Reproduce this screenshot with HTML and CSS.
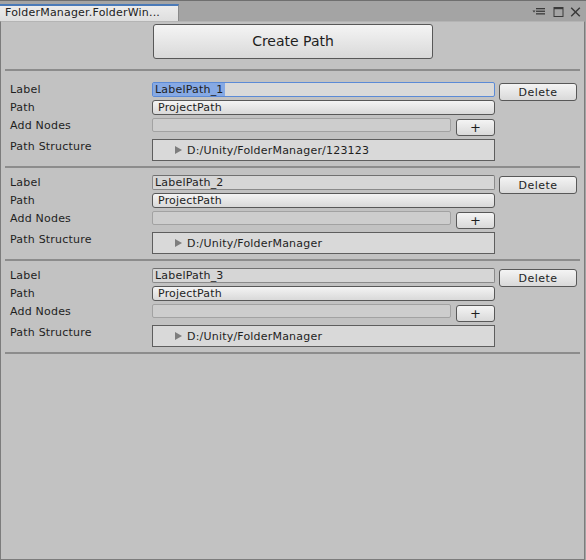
FILE: index.html
```html
<!DOCTYPE html>
<html>
<head>
<meta charset="utf-8">
<link rel="stylesheet" href="styles.css">
</head>
<body>
<div class="window">
  <div class="titlebar">
    <div class="tab">FolderManager.FolderWin...</div>
    <div class="controls">
      <svg class="ico" width="16" height="10" viewBox="0 0 16 10">
        <path d="M1.5 3.6 L4.5 3.6 L3 5.4 Z" fill="#3a3a3a"/>
        <rect x="5" y="1" width="9" height="1.3" fill="#3a3a3a"/>
        <rect x="5" y="3.6" width="9" height="1.3" fill="#3a3a3a"/>
        <rect x="5" y="6.2" width="9" height="1.3" fill="#3a3a3a"/>
      </svg>
      <svg class="ico" width="11" height="10" viewBox="0 0 11 10">
        <rect x="1" y="0.5" width="9" height="9" fill="none" stroke="#3a3a3a" stroke-width="1"/>
        <rect x="1" y="0" width="9" height="2.2" fill="#3a3a3a"/>
      </svg>
      <svg class="ico" width="11" height="10" viewBox="0 0 11 10">
        <path d="M1.2 0.8 L9.8 9.2 M9.8 0.8 L1.2 9.2" stroke="#3a3a3a" stroke-width="1.5" fill="none"/>
      </svg>
    </div>
  </div>
  <div class="content">
    <div class="toolbar">
      <button class="btn create">Create Path</button>
    </div>
    <div class="sep"></div>

    <section class="entry first">
      <div class="lbl">Label</div>
      <div class="field focused"><span class="sel">LabelPath_1</span></div>
      <button class="btn del">Delete</button>
      <div class="lbl">Path</div>
      <button class="btn popup">ProjectPath</button>
      <div class="lbl">Add Nodes</div>
      <div class="addrow"><div class="field disabled"></div><button class="btn plus">+</button></div>
      <div class="lbl">Path Structure</div>
      <div class="struct"><span class="tri"></span>D:/Unity/FolderManager/123123</div>
    </section>
    <div class="sep"></div>

    <section class="entry">
      <div class="lbl">Label</div>
      <div class="field">LabelPath_2</div>
      <button class="btn del">Delete</button>
      <div class="lbl">Path</div>
      <button class="btn popup">ProjectPath</button>
      <div class="lbl">Add Nodes</div>
      <div class="addrow"><div class="field disabled"></div><button class="btn plus">+</button></div>
      <div class="lbl">Path Structure</div>
      <div class="struct"><span class="tri"></span>D:/Unity/FolderManager</div>
    </section>
    <div class="sep"></div>

    <section class="entry">
      <div class="lbl">Label</div>
      <div class="field">LabelPath_3</div>
      <button class="btn del">Delete</button>
      <div class="lbl">Path</div>
      <button class="btn popup">ProjectPath</button>
      <div class="lbl">Add Nodes</div>
      <div class="addrow"><div class="field disabled"></div><button class="btn plus">+</button></div>
      <div class="lbl">Path Structure</div>
      <div class="struct"><span class="tri"></span>D:/Unity/FolderManager</div>
    </section>
    <div class="sep"></div>
  </div>
</div>
</body>
</html>
```

FILE: styles.css
```css
* { box-sizing: border-box; }
html, body { margin: 0; padding: 0; }
body {
  width: 586px;
  height: 560px;
  background: #a3a3a3;
  font-family: "DejaVu Sans", Verdana, sans-serif;
  font-size: 11px;
  letter-spacing: 0.2px;
  color: #1e1e1e;
  overflow: hidden;
}
.window {
  display: flex;
  flex-direction: column;
  height: 560px;
}
.titlebar {
  height: 21px;
  border-top: 1px solid #6f6f6f;
  background: #a4a4a4;
  display: flex;
  align-items: flex-end;
  flex: none;
}
.tab {
  width: 179px;
  height: 17px;
  border-top: 2px solid #4a7ab8;
  border-right: 1px solid #8a8a8a;
  background: linear-gradient(#ececec, #dedede);
  padding-left: 5px;
  line-height: 14px;
  color: #222;
  white-space: nowrap;
  overflow: hidden;
}
.controls {
  margin-left: auto;
  margin-right: 5px;
  align-self: center;
  display: flex;
  align-items: center;
  gap: 6px;
  padding-top: 2px;
}
.ico { display: block; }
.content {
  flex: 1;
  background: #c2c2c2;
  border-left: 1px solid #7c7c7c;
  border-right: 1px solid #7c7c7c;
  border-bottom: 1px solid #7c7c7c;
  margin-right: 1px;
  border-top: 1px solid #b4b4b4;
}
.toolbar {
  padding-top: 2px;
  padding-left: 152px;
}
.btn {
  font-family: "DejaVu Sans", Verdana, sans-serif;
  font-size: 11px;
  letter-spacing: 0.2px;
  color: #1e1e1e;
  background: linear-gradient(#f4f4f4, #d9d9d9);
  border: 1px solid #585858;
  border-radius: 3px;
  padding: 0;
  margin: 0;
  line-height: 13px;
}
.create {
  width: 280px;
  height: 35px;
  font-size: 14px;
  letter-spacing: 0;
  display: block;
}
.sep {
  height: 2px;
  margin: 0 4px;
  background: #8c8c8c;
}
.toolbar + .sep { margin-top: 10px; }
.entry {
  display: grid;
  grid-template-columns: 151px 343px 82px;
  grid-template-rows: 15px 15px 18px 22px;
  row-gap: 3px;
  padding: 7px 0 5px 0;
}
.entry.first { padding-top: 11px; }
.lbl {
  grid-column: 1;
  padding-left: 9px;
  line-height: 15px;
  white-space: nowrap;
}
.field {
  height: 15px;
  background: #d6d6d6;
  border: 1px solid #8a8a8a;
  border-top-color: #707070;
  border-radius: 2px;
  padding-left: 2px;
  line-height: 13px;
  white-space: nowrap;
}
.field.focused {
  border-color: #5b8ad6;
  background: #d9d9d9;
  padding-left: 0;
}
.sel {
  display: inline-block;
  height: 13px;
  background: #86a9e4;
  padding: 0 1px 0 2px;
}
.del {
  grid-column: 3;
  grid-row: 1 / span 2;
  justify-self: end;
  align-self: start;
  margin-top: 1px;
  width: 78px;
  height: 18px;
  letter-spacing: 0.5px;
}
.popup {
  grid-column: 2;
  height: 15px;
  text-align: left;
  padding-left: 5px;
  line-height: 12px;
}
.addrow {
  grid-column: 2;
  display: flex;
  align-items: flex-start;
}
.field.disabled {
  flex: 1;
  height: 14px;
  background: #cdcdcd;
  border: 1px solid #a2a2a2;
}
.plus {
  width: 39px;
  height: 17px;
  margin-left: 5px;
  margin-top: 1px;
  font-size: 13px;
  line-height: 14px;
}
.struct {
  grid-column: 2;
  height: 22px;
  background: #d9d9d9;
  border: 1px solid #5e5e5e;
  display: flex;
  align-items: center;
  padding-left: 22px;
  white-space: nowrap;
}
.tri {
  width: 0;
  height: 0;
  border-top: 4.5px solid transparent;
  border-bottom: 4.5px solid transparent;
  border-left: 7px solid #7d7d7d;
  margin-right: 5px;
}
```
